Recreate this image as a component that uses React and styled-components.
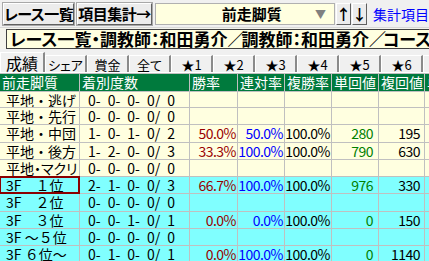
import React from 'react';
import styled, { createGlobalStyle } from 'styled-components';

const GlobalStyle = createGlobalStyle`
    html, body {
        margin: 0;
        padding: 0;
        background: #f0f0f0;
    }
    body {
        font-family: "Noto Sans CJK JP", "Noto Sans", sans-serif;
    }
`;

// en space keeps the fixed-width look of the counts
const sp = (s) => s.replace(/ /g, '\u2002');

const rows = [
    { name: '平地・逃げ', count: '0- 0- 0- 0/ 0', tone: 'yellow' },
    { name: '平地・先行', count: '0- 0- 0- 0/ 0', tone: 'yellow' },
    { name: '平地・中団', count: '1- 0- 1- 0/ 2', win: '50.0%', place: '50.0%', show: '100.0%', tan: '280', fuku: '195', tone: 'yellow' },
    { name: '平地・後方', count: '1- 2- 0- 0/ 3', win: '33.3%', place: '100.0%', show: '100.0%', tan: '790', fuku: '630', tone: 'yellow' },
    { name: '平地・マクリ', count: '0- 0- 0- 0/ 0', tone: 'yellow', narrow: true },
    { name: '3F　１位', count: '2- 1- 0- 0/ 3', win: '66.7%', place: '100.0%', show: '100.0%', tan: '976', fuku: '330', tone: 'cyan', selected: true },
    { name: '3F　２位', count: '0- 0- 0- 0/ 0', tone: 'cyan' },
    { name: '3F　３位', count: '0- 0- 1- 0/ 1', win: '0.0%', place: '0.0%', show: '100.0%', tan: '0', fuku: '150', tone: 'cyan' },
    { name: '3F ～５位', count: '0- 0- 0- 0/ 0', tone: 'cyan' },
    { name: '3F ６位～', count: '0- 1- 0- 0/ 1', win: '0.0%', place: '100.0%', show: '100.0%', tan: '0', fuku: '1140', tone: 'cyan' },
];

const headers = ['前走脚質', '着別度数', '勝率', '連対率', '複勝率', '単回値', '複回値', '単'];
const tabs = ['シェア', '賞金', '全て', '★1', '★2', '★3', '★4', '★5', '★6', '★7'];
const info = ['レース一覧・調教師：和田勇介', '調教師：和田勇介', 'コース：福島'];

const App = () => {
    return (
        <Window>
            <GlobalStyle />
            <Toolbar>
                <ToolButton w="74px">レース一覧</ToolButton>
                <ToolButton w="78px">項目集計→</ToolButton>
                <Combo>
                    <ComboLabel>前走脚質</ComboLabel>
                    <ComboArrow>▼</ComboArrow>
                </Combo>
                <ArrowButton>↑</ArrowButton>
                <ArrowButton>↓</ArrowButton>
                <LinkText>集計項目</LinkText>
            </Toolbar>
            <InfoRow>
                <InfoBox>
                    {info.map((part, i) => (
                        <React.Fragment key={part}>
                            {i > 0 && <Slash>／</Slash>}
                            {part}
                        </React.Fragment>
                    ))}
                </InfoBox>
            </InfoRow>
            <TabRow>
                <Tab active>成績</Tab>
                {tabs.map((t) => (
                    <Tab key={t}>{t}</Tab>
                ))}
            </TabRow>
            <Grid>
                {headers.map((h) => (
                    <HeadCell key={h}>{h}</HeadCell>
                ))}
                {rows.map((r) => (
                    <React.Fragment key={r.name}>
                        <NameCell tone={r.tone} selected={r.selected} narrow={r.narrow}>{r.name}</NameCell>
                        <Count tone={r.tone}>{sp(r.count)}</Count>
                        <Num tone={r.tone} color="#990000">{r.win}</Num>
                        <Num tone={r.tone} color="#0000ff">{r.place}</Num>
                        <Num tone={r.tone}>{r.show}</Num>
                        <Num tone={r.tone} color="#008000" pad="5px">{r.tan}</Num>
                        <Num tone={r.tone} pad="4px">{r.fuku}</Num>
                        <Cell tone={r.tone} />
                    </React.Fragment>
                ))}
            </Grid>
        </Window>
    );
};

export default App;

const Window = styled.div`
    width: 429px;
    height: 261px;
    overflow: hidden;
    background: #f0f0f0;
`;

const Toolbar = styled.div`
    display: flex;
    align-items: center;
    height: 27px;
    padding-left: 3px;
    white-space: nowrap;
`;

const ToolButton = styled.div`
    width: ${(p) => p.w};
    height: 22px;
    margin-right: 3px;
    display: flex;
    align-items: center;
    justify-content: center;
    box-sizing: border-box;
    background: #ececec;
    border: 1px solid;
    border-color: #ffffff #606060 #606060 #ffffff;
    outline: 1px solid #a8a8a8;
    font-size: 15px;
    font-weight: bold;
    font-feature-settings: "palt";
    letter-spacing: -0.5px;
    color: #000;
`;

const Combo = styled.div`
    width: 190px;
    height: 22px;
    display: flex;
    align-items: center;
    box-sizing: border-box;
    background: #ffffe0;
    border: 1px solid #b0b0b0;
    padding: 0 8px 0 66px;
`;

const ComboLabel = styled.span`
    flex: 1;
    font-size: 15px;
    font-weight: bold;
    font-feature-settings: "palt";
    color: #000;
`;

const ComboArrow = styled.span`
    font-size: 11px;
    color: #808080;
`;

const ArrowButton = styled.div`
    width: 15px;
    height: 22px;
    margin-left: 1px;
    display: flex;
    align-items: center;
    justify-content: center;
    box-sizing: border-box;
    background: #ececec;
    border: 1px solid;
    border-color: #ffffff #606060 #606060 #ffffff;
    font-size: 15px;
    font-weight: bold;
    color: #000;
`;

const LinkText = styled.span`
    margin-left: 6px;
    font-size: 14px;
    font-feature-settings: "palt";
    color: #0000ff;
`;

const InfoRow = styled.div`
    height: 22px;
    padding: 1px 0 0 6px;
    box-sizing: border-box;
    border-top: 1px solid #d8d8d8;
    background: #f4f4ec;
`;

const InfoBox = styled.div`
    height: 20px;
    box-sizing: border-box;
    background: #ffffe0;
    border: 1px solid #404040;
    border-right: none;
    padding-left: 3px;
    font-size: 17px;
    line-height: 18px;
    font-weight: bold;
    font-feature-settings: "palt";
    white-space: nowrap;
    overflow: hidden;
    color: #000;
`;

const Slash = styled.span`
    display: inline-block;
    width: 14px;
    text-align: center;
    font-feature-settings: normal;
`;

const TabRow = styled.div`
    display: flex;
    align-items: flex-end;
    height: 24px;
    padding-top: 3px;
    box-sizing: border-box;
    border-bottom: 1px solid #ffffff;
`;

const Tab = styled.div`
    flex: none;
    width: ${(p) => (p.active ? '45px' : '42px')};
    height: ${(p) => (p.active ? '20px' : '17px')};
    display: flex;
    align-items: center;
    justify-content: center;
    box-sizing: border-box;
    background: #f0f0f0;
    border-left: 1px solid #ffffff;
    border-top: 1px solid #ffffff;
    border-right: 2px solid #8a8a8a;
    font-size: ${(p) => (p.active ? '16px' : '13px')};
    line-height: 1;
    font-feature-settings: "palt";
    color: #000;
    white-space: nowrap;
`;

const Grid = styled.div`
    display: grid;
    grid-template-columns: 79px 109px 47px 46px 46px 46px 45px 1fr;
    grid-template-rows: 17px 15px;
    grid-auto-rows: 16.3px;
    gap: 1px;
    background: #c0c0c0;
    padding-top: 1px;
    width: 440px;
`;

const HeadCell = styled.div`
    background: #007a3d;
    color: #ffffff;
    font-size: 14px;
    line-height: 17px;
    padding-left: 2px;
    white-space: nowrap;
    overflow: hidden;
`;

const Cell = styled.div`
    background: ${(p) => (p.tone === 'cyan' ? '#80ffff' : '#ffffe0')};
    color: #000;
    font-size: 14px;
    line-height: 16px;
    padding-left: 6px;
    white-space: nowrap;
    overflow: hidden;
`;

const NameCell = styled(Cell)`
    font-feature-settings: ${(p) => (p.narrow ? '"palt"' : 'normal')};
    outline: ${(p) => (p.selected ? '2px solid #8b0000' : 'none')};
    outline-offset: -1px;
`;

const Count = styled(Cell)`
    padding-left: 8px;
`;

const Num = styled.div`
    background: ${(p) => (p.tone === 'cyan' ? '#80ffff' : '#ffffe0')};
    color: ${(p) => p.color || '#000'};
    font-size: 14px;
    line-height: 16px;
    letter-spacing: -0.5px;
    text-align: right;
    padding-right: ${(p) => p.pad || '1px'};
    white-space: nowrap;
    overflow: hidden;
`;
